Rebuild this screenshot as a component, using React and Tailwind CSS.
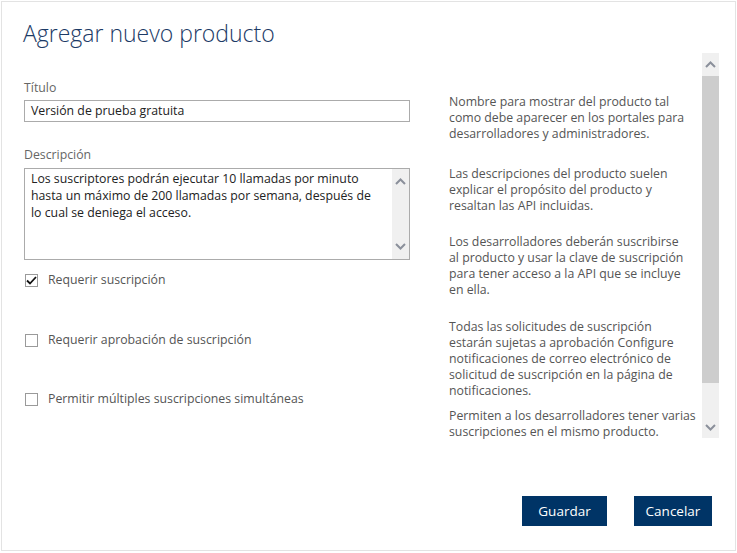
import React from "react";

const Chevron = ({ up }) => (
  <svg width="11" height="7" viewBox="0 0 11 7" className="block">
    <path
      d={up ? "M1 6 L5.5 1.5 L10 6" : "M1 1 L5.5 5.5 L10 1"}
      fill="none"
      stroke="#8b909b"
      strokeWidth="2"
    />
  </svg>
);

const CheckBox = ({ checked, label }) => (
  <div className="flex items-center h-[20px]">
    <div className="w-[13px] h-[13px] border border-[#9a9a9a] bg-white flex items-center justify-center ml-[1px]">
      {checked && (
        <svg width="11" height="9" viewBox="0 0 11 9">
          <path d="M1 4.5 L4 7.5 L10 1" fill="none" stroke="#111" strokeWidth="1.8" />
        </svg>
      )}
    </div>
    <span className="ml-[10px] text-[12.3px] text-[#555]">{label}</span>
  </div>
);

const Para = ({ lines, className = "" }) => (
  <div className={"text-[12.3px] leading-[16px] text-[#555] " + className}>
    {lines.map((l, i) => (
      <div key={i} className="whitespace-nowrap">
        {l}
      </div>
    ))}
  </div>
);

export default function App() {
  return (
    <div
      className="w-[737px] h-[553px] bg-white pt-[1px] pl-[1px]"
      style={{ fontFamily: '"Open Sans", "Noto Sans", sans-serif' }}
    >
      <div className="w-[735px] h-[550px] border border-[#e3e3e3] flex flex-col">
        <h1 className="text-[23px] font-light leading-[32px] text-[#1c3a66] pl-[21px] pt-[15px]">
          Agregar nuevo producto
        </h1>

        <div className="flex mt-[4px] h-[385px]">
          {/* left column */}
          <div className="w-[386px] ml-[22px] flex flex-col">
            <div className="text-[12.3px] text-[#666] mt-[27px] leading-[16px]">Título</div>
            <div className="mt-[4px] h-[22px] border border-[#ababab] flex items-center pl-[6px] text-[12.3px] text-[#222]">
              Versión de prueba gratuita
            </div>

            <div className="text-[12.3px] text-[#666] mt-[25px] leading-[16px]">Descripción</div>
            <div className="mt-[5px] h-[92px] border border-[#ababab] flex">
              <div className="flex-1 pl-[6px] pt-[1px] text-[12.3px] leading-[17px] text-[#222]">
                <div className="whitespace-nowrap">Los suscriptores podrán ejecutar 10 llamadas por minuto</div>
                <div className="whitespace-nowrap">hasta un máximo de 200 llamadas por semana, después de</div>
                <div className="whitespace-nowrap">lo cual se deniega el acceso.</div>
              </div>
              <div className="w-[17px] bg-[#f0f0f0] flex flex-col justify-between items-center py-[9px]">
                <Chevron up />
                <Chevron />
              </div>
            </div>

            <div className="mt-[10px]">
              <CheckBox checked label="Requerir suscripción" />
            </div>
            <div className="mt-[40px]">
              <CheckBox label="Requerir aprobación de suscripción" />
            </div>
            <div className="mt-[39px]">
              <CheckBox label="Permitir múltiples suscripciones simultáneas" />
            </div>
          </div>

          {/* right column */}
          <div className="ml-[39px] w-[253px] flex flex-col">
            <Para
              className="mt-[41px]"
              lines={[
                "Nombre para mostrar del producto tal",
                "como debe aparecer en los portales para",
                "desarrolladores y administradores.",
              ]}
            />
            <Para
              className="mt-[24px]"
              lines={[
                "Las descripciones del producto suelen",
                "explicar el propósito del producto y",
                "resaltan las API incluidas.",
              ]}
            />
            <Para
              className="mt-[20px]"
              lines={[
                "Los desarrolladores deberán suscribirse",
                "al producto y usar la clave de suscripción",
                "para tener acceso a la API que se incluye",
                "en ella.",
              ]}
            />
            <Para
              className="mt-[21px]"
              lines={[
                "Todas las solicitudes de suscripción",
                "estarán sujetas a aprobación Configure",
                "notificaciones de correo electrónico de",
                "solicitud de suscripción en la página de",
                "notificaciones.",
              ]}
            />
            <Para
              className="mt-[9px]"
              lines={[
                "Permiten a los desarrolladores tener varias",
                "suscripciones en el mismo producto.",
              ]}
            />
          </div>

          {/* scrollbar */}
          <div className="w-[17px] bg-[#f0f0f0] flex flex-col">
            <div className="h-[23px] flex items-center justify-center">
              <Chevron up />
            </div>
            <div className="h-[307px] bg-[#cdcdcd]" />
            <div className="flex-1 flex items-end justify-center pb-[7px]">
              <Chevron />
            </div>
          </div>
        </div>

        <div className="flex justify-end mt-[58px] pr-[23px] gap-[27px]">
          <button className="w-[85px] h-[30px] bg-[#003466] text-white text-[13.5px]">Guardar</button>
          <button className="w-[78px] h-[30px] bg-[#003466] text-white text-[13.5px]">Cancelar</button>
        </div>
      </div>
    </div>
  );
}
